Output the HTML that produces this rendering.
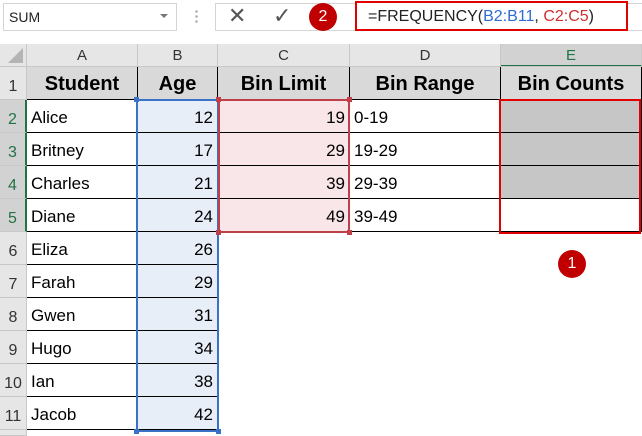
<!DOCTYPE html>
<html><head><style>
*{margin:0;padding:0;box-sizing:border-box}
html,body{width:642px;height:436px;overflow:hidden}
body{background:#fff;position:relative;font-family:"Liberation Sans",Arial,sans-serif}
.a{position:absolute}
.ch{position:absolute;top:44px;height:23px;background:#e6e6e6;border-right:1px solid #c8c8c8;text-align:center;font-size:15px;color:#333;line-height:23px}
.rh{position:absolute;left:0;width:27px;height:33px;background:#e6e6e6;border-bottom:1px solid #c8c8c8;border-right:1px solid #c8c8c8;font-size:16px;color:#333;text-align:center;padding-top:11px}
.c{position:absolute;height:33px;border-bottom:1px solid #000;border-right:1px solid #000;font-size:17px;line-height:36px;padding:0 4px;color:#000}
.h{background:#d9d9d9;font-weight:bold;font-size:20px;text-align:center;line-height:34px}
.r{text-align:right}
.circ{position:absolute;width:28px;height:28px;border-radius:50%;background:#c00000;color:#fff;font-size:16px;text-align:center;line-height:28px}
</style></head><body>
<div class="a" style="left:3px;top:3px;width:174px;height:28px;border:1px solid #d4d4d4;font-size:14px;line-height:26px;padding-left:5px;color:#222">SUM</div>
<div class="a" style="left:160px;top:14px;width:0;height:0;border-left:4px solid transparent;border-right:4px solid transparent;border-top:4px solid #777"></div>
<div class="a" style="left:195px;top:9px;width:3px;height:16px;background:radial-gradient(circle,#aaa 1px,transparent 1.5px) 0 0/3px 5px"></div>
<div class="a" style="left:215px;top:3px;width:140px;height:28px;border:1px solid #d4d4d4;border-right:none"></div>
<div class="a" style="left:228px;top:3px;font-size:22px;color:#555">✕</div>
<div class="a" style="left:273px;top:3px;font-size:22px;color:#555">✓</div>
<div class="circ" style="left:309px;top:3px">2</div>
<div class="a" style="left:355px;top:1px;width:273px;height:30px;border:2px solid #e00000;font-size:16px;line-height:28px;padding-left:11px;color:#222">=FREQUENCY(<span style="color:#2f6bd1">B2:B11</span>, <span style="color:#d03030">C2:C5</span>)</div>
<div class="a" style="left:628px;top:3px;width:14px;height:28px;border-top:1px solid #d4d4d4;border-bottom:1px solid #d4d4d4"></div>

<div class="a" style="left:0;top:44px;width:27px;height:23px;background:#e6e6e6;border-right:1px solid #c8c8c8"></div>
<div class="a" style="left:8px;top:48px;width:0;height:0;border-left:15px solid transparent;border-bottom:15px solid #b4b4b4"></div>
<div class="ch" style="left:27px;width:111px">A</div>
<div class="ch" style="left:138px;width:80px">B</div>
<div class="ch" style="left:218px;width:132px">C</div>
<div class="ch" style="left:350px;width:151px">D</div>
<div class="ch" style="left:501px;width:141px;background:#d2d2d2;color:#217346;border-bottom:2px solid #217346">E</div>
<div class="a" style="left:0;top:66px;width:642px;height:1px;background:#c8c8c8"></div>

<div class="rh" style="top:67px">1</div>
<div class="rh" style="top:100px;color:#217346;border-right:2px solid #217346;background:#d2d2d2">2</div>
<div class="rh" style="top:133px;color:#217346;border-right:2px solid #217346;background:#d2d2d2">3</div>
<div class="rh" style="top:166px;color:#217346;border-right:2px solid #217346;background:#d2d2d2">4</div>
<div class="rh" style="top:199px;color:#217346;border-right:2px solid #217346;background:#d2d2d2">5</div>
<div class="rh" style="top:232px">6</div>
<div class="rh" style="top:265px">7</div>
<div class="rh" style="top:298px">8</div>
<div class="rh" style="top:331px">9</div>
<div class="rh" style="top:364px">10</div>
<div class="rh" style="top:397px">11</div>
<div class="rh" style="top:430px;height:6px;padding:0"></div>

<div class="c h" style="left:27px;top:67px;width:111px">Student</div>
<div class="c h" style="left:138px;top:67px;width:80px">Age</div>
<div class="c h" style="left:218px;top:67px;width:132px">Bin Limit</div>
<div class="c h" style="left:350px;top:67px;width:151px">Bin Range</div>
<div class="c h" style="left:501px;top:67px;width:141px">Bin Counts</div>

<div class="c" style="left:27px;top:100px;width:111px">Alice</div>
<div class="c" style="left:27px;top:133px;width:111px">Britney</div>
<div class="c" style="left:27px;top:166px;width:111px">Charles</div>
<div class="c" style="left:27px;top:199px;width:111px">Diane</div>
<div class="c" style="left:27px;top:232px;width:111px">Eliza</div>
<div class="c" style="left:27px;top:265px;width:111px">Farah</div>
<div class="c" style="left:27px;top:298px;width:111px">Gwen</div>
<div class="c" style="left:27px;top:331px;width:111px">Hugo</div>
<div class="c" style="left:27px;top:364px;width:111px">Ian</div>
<div class="c" style="left:27px;top:397px;width:111px">Jacob</div>

<div class="c r" style="left:138px;top:100px;width:80px;background:#e8eef8">12</div>
<div class="c r" style="left:138px;top:133px;width:80px;background:#e8eef8">17</div>
<div class="c r" style="left:138px;top:166px;width:80px;background:#e8eef8">21</div>
<div class="c r" style="left:138px;top:199px;width:80px;background:#e8eef8">24</div>
<div class="c r" style="left:138px;top:232px;width:80px;background:#e8eef8">26</div>
<div class="c r" style="left:138px;top:265px;width:80px;background:#e8eef8">29</div>
<div class="c r" style="left:138px;top:298px;width:80px;background:#e8eef8">31</div>
<div class="c r" style="left:138px;top:331px;width:80px;background:#e8eef8">34</div>
<div class="c r" style="left:138px;top:364px;width:80px;background:#e8eef8">38</div>
<div class="c r" style="left:138px;top:397px;width:80px;background:#e8eef8">42</div>

<div class="c r" style="left:218px;top:100px;width:132px;background:#f8e6e8">19</div>
<div class="c r" style="left:218px;top:133px;width:132px;background:#f8e6e8">29</div>
<div class="c r" style="left:218px;top:166px;width:132px;background:#f8e6e8">39</div>
<div class="c r" style="left:218px;top:199px;width:132px;background:#f8e6e8">49</div>

<div class="c" style="left:350px;top:100px;width:151px">0-19</div>
<div class="c" style="left:350px;top:133px;width:151px">19-29</div>
<div class="c" style="left:350px;top:166px;width:151px">29-39</div>
<div class="c" style="left:350px;top:199px;width:151px">39-49</div>

<div class="c" style="left:501px;top:100px;width:141px;background:#c6c6c6"></div>
<div class="c" style="left:501px;top:133px;width:141px;background:#c6c6c6"></div>
<div class="c" style="left:501px;top:166px;width:141px;background:#c6c6c6"></div>
<div class="c" style="left:501px;top:199px;width:141px;background:#fff"></div>

<div class="a" style="left:136px;top:99px;width:83px;height:333px;border:2px solid #3a72c8"></div>
<div class="a" style="left:134px;top:97px;width:5px;height:5px;background:#3a72c8"></div>
<div class="a" style="left:216px;top:97px;width:5px;height:5px;background:#3a72c8"></div>
<div class="a" style="left:134px;top:429px;width:5px;height:5px;background:#3a72c8"></div>
<div class="a" style="left:216px;top:429px;width:5px;height:5px;background:#3a72c8"></div>
<div class="a" style="left:218px;top:99px;width:132px;height:134px;border:2px solid #c0404a"></div>
<div class="a" style="left:216px;top:97px;width:5px;height:5px;background:#c0404a"></div>
<div class="a" style="left:347px;top:97px;width:5px;height:5px;background:#c0404a"></div>
<div class="a" style="left:347px;top:230px;width:5px;height:5px;background:#c0404a"></div>
<div class="a" style="left:216px;top:230px;width:5px;height:5px;background:#c0404a"></div>

<div class="a" style="left:499px;top:99px;width:142px;height:135px;border:2px solid #e00000"></div>
<div class="circ" style="left:558px;top:250px">1</div>
</body></html>
